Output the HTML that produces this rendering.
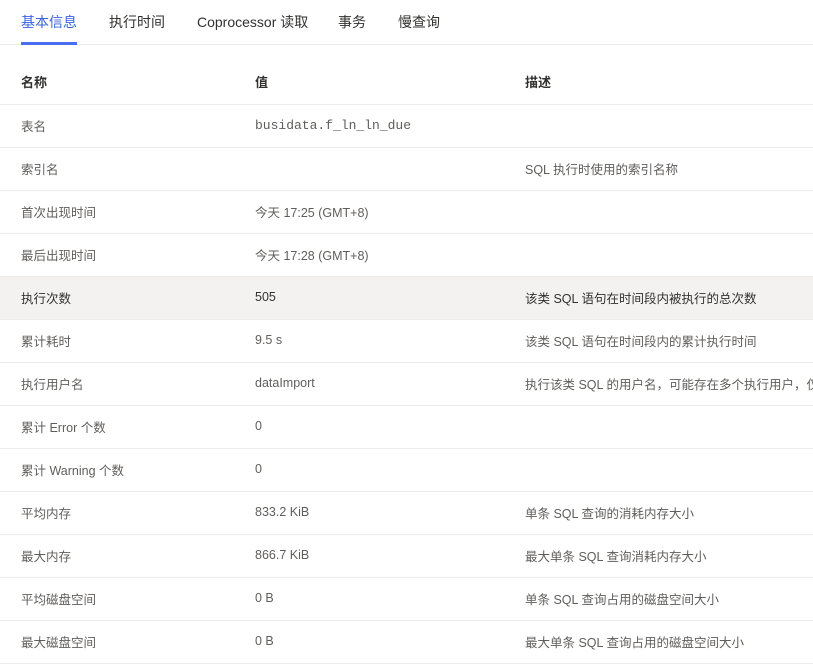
<!DOCTYPE html>
<html><head><meta charset="utf-8"><style>
body{margin:0;width:813px;height:667px;overflow:hidden;background:#fff;font-family:"Liberation Sans","Noto Sans CJK SC",sans-serif;color:#323130}
.tabs{position:relative;height:44px;border-bottom:1px solid #edebe9;}
.tab{position:absolute;top:12px;font-size:14px;line-height:20px;color:#323130}
.tab.a{color:#3a63e0}
.ul{position:absolute;left:21px;width:56px;top:42px;height:3px;background:#4a6ef0}
table{border-collapse:collapse;width:813px;margin-top:16px;table-layout:fixed}
td,th{box-sizing:border-box;height:43px;border-bottom:1px solid #edebe9;font-size:12.5px;text-align:left;padding:0 0 1px 0;white-space:nowrap;overflow:hidden;color:#605e5c;font-weight:normal}
th{font-weight:bold;color:#323130;height:43px;font-size:13px}
td:first-child,th:first-child{padding-left:21px}
tr.h td{background:#f3f2f1;color:#323130}
.mono{font-family:"Liberation Mono",monospace;font-size:13px}
</style></head><body>
<div class="tabs">
<span class="tab a" style="left:21px">基本信息</span>
<span class="tab" style="left:109px">执行时间</span>
<span class="tab" style="left:197px">Coprocessor 读取</span>
<span class="tab" style="left:338px">事务</span>
<span class="tab" style="left:398px">慢查询</span>
<div class="ul"></div>
</div>
<table>
<colgroup><col style="width:255px"><col style="width:270px"><col></colgroup>
<tr><th>名称</th><th>值</th><th>描述</th></tr>
<tr><td>表名</td><td class="mono">busidata.f_ln_ln_due</td><td></td></tr>
<tr><td>索引名</td><td></td><td>SQL 执行时使用的索引名称</td></tr>
<tr><td>首次出现时间</td><td>今天 17:25 (GMT+8)</td><td></td></tr>
<tr><td>最后出现时间</td><td>今天 17:28 (GMT+8)</td><td></td></tr>
<tr class="h"><td>执行次数</td><td>505</td><td>该类 SQL 语句在时间段内被执行的总次数</td></tr>
<tr><td>累计耗时</td><td>9.5 s</td><td>该类 SQL 语句在时间段内的累计执行时间</td></tr>
<tr><td>执行用户名</td><td>dataImport</td><td>执行该类 SQL 的用户名，可能存在多个执行用户，仅</td></tr>
<tr><td>累计 Error 个数</td><td>0</td><td></td></tr>
<tr><td>累计 Warning 个数</td><td>0</td><td></td></tr>
<tr><td>平均内存</td><td>833.2 KiB</td><td>单条 SQL 查询的消耗内存大小</td></tr>
<tr><td>最大内存</td><td>866.7 KiB</td><td>最大单条 SQL 查询消耗内存大小</td></tr>
<tr><td>平均磁盘空间</td><td>0 B</td><td>单条 SQL 查询占用的磁盘空间大小</td></tr>
<tr><td>最大磁盘空间</td><td>0 B</td><td>最大单条 SQL 查询占用的磁盘空间大小</td></tr>
</table>
</body></html>
